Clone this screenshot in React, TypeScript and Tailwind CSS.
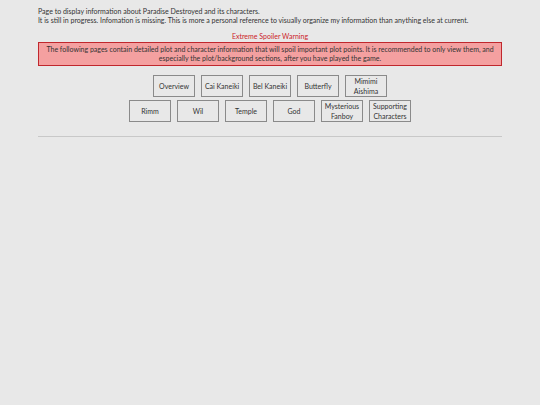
import React from "react";

const row1 = [["Overview"], ["Cai Kaneiki"], ["Bel Kaneiki"], ["Butterfly"], ["Mimimi", "Aishima"]];
const row2 = [["Rimm"], ["Wil"], ["Temple"], ["God"], ["Mysterious", "Fanboy"], ["Supporting", "Characters"]];

function Btn({ lines }: { lines: string[] }) {
  return (
    <div className="w-[42px] h-[22px] border border-[#8a8a8a] flex flex-col items-center justify-center text-center leading-[10px] text-[7px] text-[#333]">
      {lines.map((l) => (
        <span key={l}>{l}</span>
      ))}
    </div>
  );
}

export default function App() {
  return (
    <div
      className="w-[540px] h-[405px] bg-[#e8e8e8] text-[#333] px-[38px] pt-[7px]"
      style={{ fontFamily: "Lato, 'Noto Sans', sans-serif" }}
    >
      <div className="text-[7px] leading-[9px]">
        <p>Page to display information about Paradise Destroyed and its characters.</p>
        <p>It is still in progress. Infomation is missing. This is more a personal reference to visually organize my information than anything else at current.</p>
      </div>
      <p className="mt-[7px] text-center text-[7px] leading-[9px] text-[#cc2229]">Extreme Spoiler Warning</p>
      <div className="mt-[1px] h-[24px] bg-[#f4a0a0] border border-[#c0272d] flex flex-col justify-center text-center text-[7px] leading-[9px] text-[#333] whitespace-nowrap">
        <p>The following pages contain detailed plot and character information that will spoil important plot points. It is recommended to only view them, and</p>
        <p>especially the plot/background sections, after you have played the game.</p>
      </div>
      <div className="mt-[9px] flex flex-col items-center gap-[3px]">
        <div className="flex gap-[6px]">
          {row1.map((l) => (
            <Btn key={l[0]} lines={l} />
          ))}
        </div>
        <div className="flex gap-[6px]">
          {row2.map((l) => (
            <Btn key={l[0]} lines={l} />
          ))}
        </div>
      </div>
      <div className="mt-[14px] border-t border-[#c8c8c8]" />
    </div>
  );
}
